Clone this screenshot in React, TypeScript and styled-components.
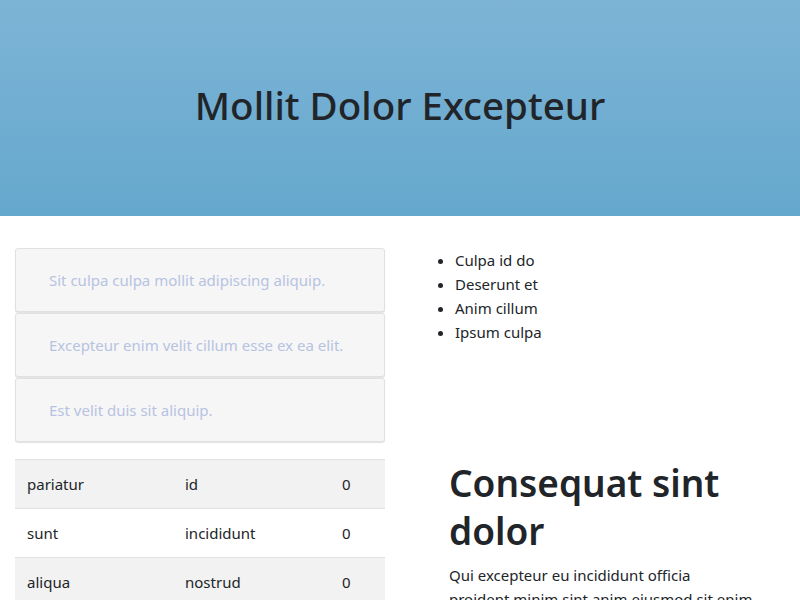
import styled, { createGlobalStyle } from "styled-components";

const GlobalStyle = createGlobalStyle`
  * {
    box-sizing: border-box;
  }
  body {
    margin: 0;
    font-family: "Segoe UI", "Noto Sans", "Open Sans", sans-serif;
    font-size: 15px;
    line-height: 24px;
    color: #212529;
    background: #fff;
  }
`;

const tips = [
  "Sit culpa culpa mollit adipiscing aliquip.",
  "Excepteur enim velit cillum esse ex ea elit.",
  "Est velit duis sit aliquip.",
];

const bullets = ["Culpa id do", "Deserunt et", "Anim cillum", "Ipsum culpa"];

const rows = [
  ["pariatur", "id", "0"],
  ["sunt", "incididunt", "0"],
  ["aliqua", "nostrud", "0"],
];

const App: React.FC = () => {
  return (
    <>
      <GlobalStyle />
      <Hero>
        <HeroTitle>Mollit Dolor Excepteur</HeroTitle>
      </Hero>
      <Main>
        <Row>
          <Column>
            <CardStack>
              {tips.map((tip) => (
                <TipCard key={tip}>{tip}</TipCard>
              ))}
            </CardStack>
          </Column>
          <Column>
            <BulletList>
              {bullets.map((b) => (
                <li key={b}>{b}</li>
              ))}
            </BulletList>
          </Column>
        </Row>
        <Row $spaced>
          <Column>
            <Table>
              <colgroup>
                <col style={{ width: 158 }} />
                <col style={{ width: 157 }} />
                <col />
              </colgroup>
              <tbody>
                {rows.map((r, i) => (
                  <TableRow key={r[0]} $striped={i % 2 === 0}>
                    {r.map((c, j) => (
                      <Cell key={j}>{c}</Cell>
                    ))}
                  </TableRow>
                ))}
              </tbody>
            </Table>
          </Column>
          <Column>
            <Article>
              <ArticleTitle>Consequat sint dolor</ArticleTitle>
              <ArticleText>
                Qui excepteur eu incididunt officia proident minim sint anim
                eiusmod sit enim laborum.
              </ArticleText>
            </Article>
          </Column>
        </Row>
      </Main>
    </>
  );
};

export default App;

const Hero = styled.header`
  display: flex;
  align-items: center;
  justify-content: center;
  height: 216px;
  background: linear-gradient(to bottom, #7db4d6, #65a8cd);
`;

const HeroTitle = styled.h1`
  margin: 0 0 6px;
  font-size: 38.5px;
  font-weight: 500;
  line-height: 48px;
  color: #212529;
`;

const Main = styled.main`
  padding: 32px 0 0;
`;

const Row = styled.div<{ $spaced?: boolean }>`
  display: grid;
  grid-template-columns: 1fr 1fr;
  margin-top: ${(props) => (props.$spaced ? "17px" : "0")};
`;

const Column = styled.div`
  padding: 0 15px;
`;

const CardStack = styled.div`
  display: flex;
  flex-direction: column;
  gap: 1px;
`;

const TipCard = styled.div`
  display: flex;
  align-items: center;
  height: 64px;
  padding: 0 33px;
  background: #f6f6f6;
  border: 1px solid #e1e1e1;
  border-radius: 3px;
  box-shadow: 0 1px 1px rgba(0, 0, 0, 0.12);
  color: #b6c3e2;
`;

const BulletList = styled.ul`
  margin: 0;
  padding-left: 40px;
`;

const Table = styled.table`
  width: 100%;
  border-collapse: collapse;
  table-layout: fixed;
`;

const TableRow = styled.tr<{ $striped: boolean }>`
  background: ${(props) => (props.$striped ? "#f2f2f2" : "#fff")};
`;

const Cell = styled.td`
  padding: 12px;
  border-top: 1px solid #dee2e6;
  vertical-align: top;
`;

const Article = styled.section`
  padding: 0 31px 0 34px;
`;

const ArticleTitle = styled.h2`
  margin: 0 0 8px;
  font-size: 37px;
  font-weight: 600;
  line-height: 48px;
`;

const ArticleText = styled.p`
  margin: 0;
`;
